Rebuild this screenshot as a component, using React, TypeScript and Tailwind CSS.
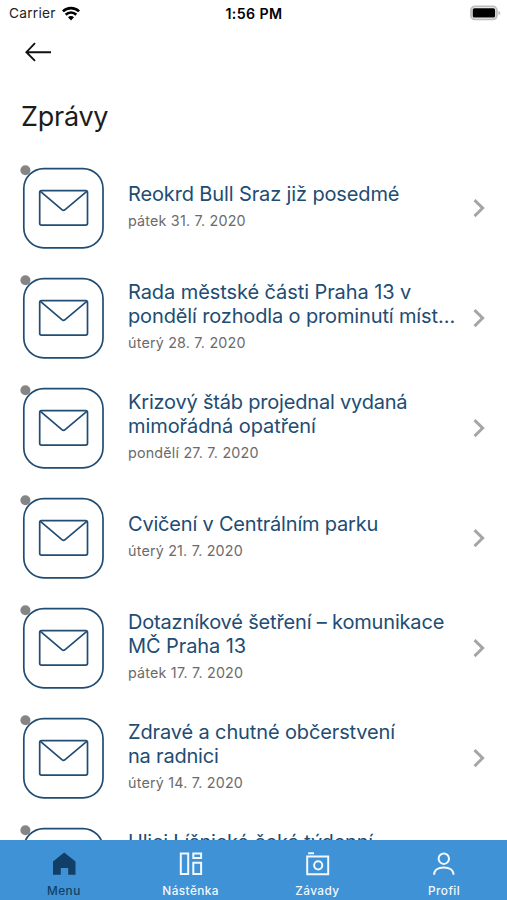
import type { ReactNode } from "react";

type Line = { text: string; tracking: string };
type Message = { lines: Line[]; date: string };

const messages: Message[] = [
  { lines: [{ text: "Reokrd Bull Sraz již posedmé", tracking: "tracking-[-0.13px]" }], date: "pátek 31. 7. 2020" },
  { lines: [{ text: "Rada městské části Praha 13 v", tracking: "tracking-[-0.08px]" }, { text: "pondělí rozhodla o prominutí míst…", tracking: "tracking-[-0.14px]" }], date: "úterý 28. 7. 2020" },
  { lines: [{ text: "Krizový štáb projednal vydaná", tracking: "tracking-[-0.2px]" }, { text: "mimořádná opatření", tracking: "tracking-[-0.08px]" }], date: "pondělí 27. 7. 2020" },
  { lines: [{ text: "Cvičení v Centrálním parku", tracking: "tracking-[-0.2px]" }], date: "úterý 21. 7. 2020" },
  { lines: [{ text: "Dotazníkové šetření – komunikace", tracking: "tracking-[-0.17px]" }, { text: "MČ Praha 13", tracking: "tracking-[-0.08px]" }], date: "pátek 17. 7. 2020" },
  { lines: [{ text: "Zdravé a chutné občerstvení", tracking: "tracking-[-0.13px]" }, { text: "na radnici", tracking: "tracking-[-0.2px]" }], date: "úterý 14. 7. 2020" },
  { lines: [{ text: "Ulici Líšnické čeká týdenní", tracking: "tracking-[-0.19px]" }, { text: "", tracking: "tracking-normal" }], date: "" },
];

function StatusBar() {
  return (
    <div className="grid h-7 shrink-0 grid-cols-3 items-center pl-[9px] pr-[6px] text-black">
      <div className="flex items-center gap-[6px]">
        <span className="text-[13.7px] leading-none tracking-[0.25px] text-[#222]">Carrier</span>
        <svg className="-mt-px" width="18" height="15" viewBox="0 0 18 15" fill="none" stroke="currentColor" strokeWidth="2.7">
          <path d="M0.9 5.4a11.5 11.5 0 0 1 16.2 0" />
          <path d="M3.7 8.7a7.5 7.5 0 0 1 10.6 0" />
          <path d="M9 14.4 6 11.3a4.2 4.2 0 0 1 6 0Z" fill="currentColor" stroke="none" />
        </svg>
      </div>
      <span className="pr-[2px] pt-px text-center text-[14.2px] font-semibold leading-none tracking-[0.4px]">1:56 PM</span>
      <svg className="-mt-[3px] justify-self-end" width="32" height="16" viewBox="0 0 32 16">
        <rect x="2" y="1.4" width="25.8" height="13" rx="4" fill="#f4f4f4" stroke="#bdbdbd" strokeWidth="1.9" />
        <rect x="3.7" y="3.3" width="22.4" height="9.2" rx="1.6" fill="#000" />
        <path d="M29.4 5.7v4.4q2-.7 2-2.2t-2-2.2Z" fill="#bdbdbd" />
      </svg>
    </div>
  );
}

function MessageIcon() {
  return (
    <svg className="shrink-0" width="84" height="88" viewBox="0 0 84 88" fill="none">
      <rect x="3.8" y="4.6" width="79.2" height="79.2" rx="20" stroke="#214c73" strokeWidth="1.7" />
      <circle cx="5.4" cy="6.3" r="5" fill="#858585" />
      <g stroke="#214c73" strokeWidth="1.7" strokeLinejoin="round">
        <rect x="19.7" y="26.7" width="47.8" height="34.4" rx="1.8" />
        <path d="m20.4 27.4 21.5 18.3q1.6 1.3 3.2 0l21.7-18.3" />
      </g>
    </svg>
  );
}

function MessageRow({ message }: { message: Message }) {
  return (
    <li className="flex h-[110px] shrink-0 items-center pl-5 pr-[21px]">
      <MessageIcon />
      <div className="ml-6 min-w-0 flex-1">
        {message.lines.map((line, i) => (
          <p key={i} className={`h-[24.5px] whitespace-nowrap text-[20px] leading-[24.5px] text-[#214c73] ${line.tracking}`}>
            {line.text}
          </p>
        ))}
        <p className="h-[27.5px] text-[14.3px] leading-[27.5px] tracking-[0.2px] text-[#6b6b6b]">{message.date}</p>
      </div>
      <svg className="shrink-0" width="14" height="20" viewBox="0 0 14 20" fill="none" stroke="#a6a6a6" strokeWidth="2.9">
        <path d="m2.5 2.1 8.2 8-8.2 8" />
      </svg>
    </li>
  );
}

function Tab({ label, active, children }: { label: string; active?: boolean; children: ReactNode }) {
  return (
    <div className={`flex flex-1 flex-col items-center pt-[11px] ${active ? "text-[#113f67]" : "text-[#f2f8fd]"}`}>
      <svg width="26" height="26" viewBox="0 0 26 26" fill="none" stroke="currentColor" strokeWidth="2">
        {children}
      </svg>
      <span className="mt-[6px] pl-[1px] text-[11.8px] font-medium leading-4 tracking-[0.42px]">{label}</span>
    </div>
  );
}

export default function App() {
  return (
    <div className="flex h-[900px] w-[507px] flex-col overflow-hidden bg-white font-[Inter,'Liberation_Sans',sans-serif]">
      <StatusBar />
      <header className="shrink-0 pl-[25px]">
        <svg className="mt-[14px]" width="27" height="20" viewBox="0 0 27 20" fill="none" stroke="#111" strokeWidth="1.9">
          <path d="M26 10.2H1.5M10 1.2 1.4 10.2l8.6 8.7" />
        </svg>
        <h1 className="-ml-1 mt-9 h-[55px] text-[27px] leading-[38px] tracking-[-0.25px] text-[#1c1c1c]">Zprávy</h1>
      </header>
      <ul className="flex min-h-0 flex-1 flex-col overflow-hidden">
        {messages.map((message, i) => (
          <MessageRow key={i} message={message} />
        ))}
      </ul>
      <nav className="flex h-[60px] shrink-0 bg-[#3f92d5]">
        <Tab label="Menu" active>
          <path d="M14.2 1.4 25.5 10.6v13.1h-7.3v-6.6h-7.4v6.6H3V10.6Z" fill="currentColor" stroke="none" />
        </Tab>
        <Tab label="Nástěnka">
          <path d="M3.8 2.4h7.4v20.7H3.8ZM16.3 2.4h7.8v4.7h-7.8ZM16.3 11.8h7.8v11.3h-7.8Z" />
        </Tab>
        <Tab label="Závady">
          <path d="M3.2 5.4h21v17.8h-21ZM4.2 2.2h5.8" />
          <circle cx="14.2" cy="14.3" r="4.1" />
        </Tab>
        <Tab label="Profil">
          <circle cx="12.8" cy="7.7" r="5.2" />
          <path d="M3.1 23.8c0-4.8 4.1-7.3 9.7-7.3s9.7 2.5 9.7 7.3" />
        </Tab>
      </nav>
    </div>
  );
}
